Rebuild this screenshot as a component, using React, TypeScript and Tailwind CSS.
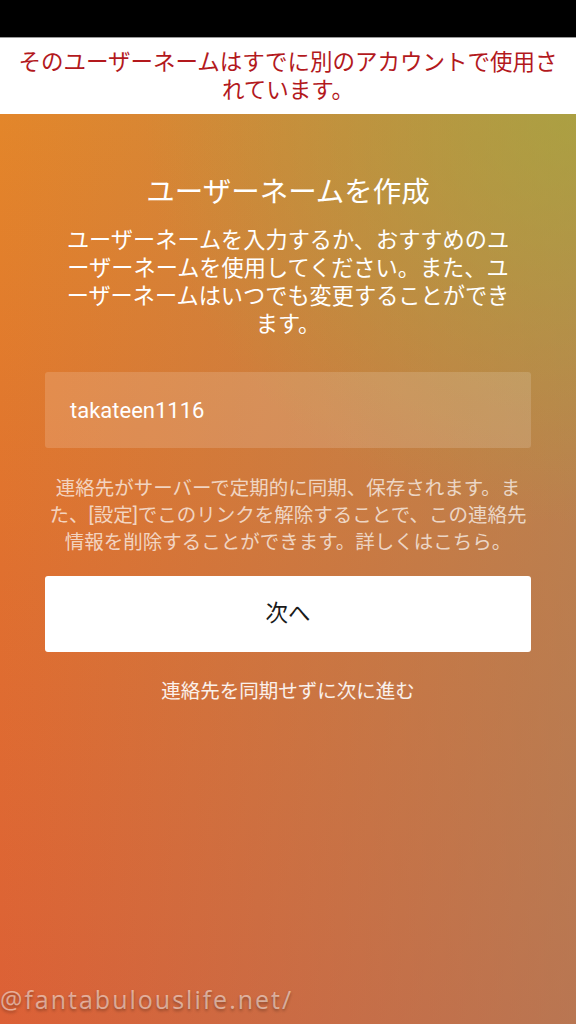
import React from 'react';

const font = { fontFamily: "Roboto, 'Noto Sans CJK JP', sans-serif" };

const introLines = [
  'ユーザーネームを入力するか、おすすめのユ',
  'ーザーネームを使用してください。また、ユ',
  'ーザーネームはいつでも変更することができ',
  'ます。',
];

const noticeLines = [
  '連絡先がサーバーで定期的に同期、保存されます。ま',
  'た、[設定]でこのリンクを解除することで、この連絡先',
  '情報を削除することができます。詳しくはこちら。',
];

const App: React.FC = () => {
  return (
    <div className="relative flex min-h-[1024px] w-[576px] flex-col overflow-hidden" style={font}>
      <div className="h-[38px] border-b border-[#9a9a9a] bg-black"></div>

      <div className="flex h-[76px] flex-col items-center justify-center bg-white text-center text-[22.5px] leading-[28px] text-[#b3191d]">
        <span className="whitespace-nowrap">そのユーザーネームはすでに別のアカウントで使用さ</span>
        <span>れています。</span>
      </div>

      <div className="flex flex-1 flex-col items-center bg-[radial-gradient(ellipse_75%_45%_at_100%_0%,rgba(160,175,60,0.6)_0%,rgba(160,175,60,0)_100%),linear-gradient(to_right,rgba(150,140,110,0)_0%,rgba(150,140,110,0.5)_100%),linear-gradient(to_bottom,#e3862a_0%,#e0702f_50%,#dc6036_100%)] px-[45px] pt-[61px]">
        <h1 className="text-[28.5px] leading-[36px] font-normal text-white">ユーザーネームを作成</h1>

        <p className="mt-[15px] flex flex-col items-center text-[22.2px] leading-[28px] text-white">
          {introLines.map((l) => (
            <span key={l} className="whitespace-nowrap">{l}</span>
          ))}
        </p>

        <div className="mt-[34px] flex h-[76px] w-full items-center rounded-[3px] bg-white/15 px-[25px]">
          <span className="text-[22px] text-white">takateen1116</span>
        </div>

        <p className="mt-[27px] flex flex-col items-center text-[19.5px] leading-[27px] text-white/70">
          {noticeLines.map((l) => (
            <span key={l} className="whitespace-nowrap">{l}</span>
          ))}
        </p>

        <button className="mt-[20px] flex h-[76px] w-full items-center justify-center rounded-[3px] bg-white text-[22.5px] text-[#1a1a1a]">
          次へ
        </button>

        <div className="mt-[26px] text-[19.5px] leading-[27px] text-white/90">連絡先を同期せずに次に進む</div>
      </div>

      <div className="absolute bottom-[12px] left-0 font-['Open_Sans',sans-serif] text-[25px] leading-none tracking-[2px] text-white/50 [text-shadow:0_2px_3px_rgba(0,0,0,0.3)]">
        @fantabulouslife.net/
      </div>
    </div>
  );
};

export default App;
